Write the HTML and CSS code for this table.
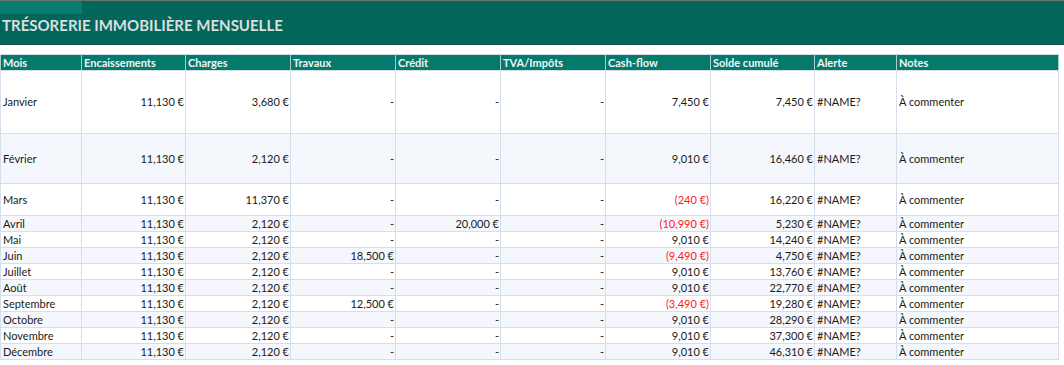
FILE: index.html
```html
<!DOCTYPE html>
<html lang="fr">
<head>
<meta charset="utf-8">
<title>Trésorerie immobilière mensuelle</title>
<link rel="stylesheet" href="styles.css">
</head>
<body>
<div class="sheet">
  <header class="banner">
    <div class="banner-cell"></div>
    <h1 class="banner-title">TRÉSORERIE IMMOBILIÈRE MENSUELLE</h1>
  </header>
  <table class="grid">
    <colgroup>
      <col class="c-mois"><col class="c-num4"><col class="c-num"><col class="c-num"><col class="c-num"><col class="c-num"><col class="c-num"><col class="c-num4"><col class="c-alerte"><col class="c-notes">
    </colgroup>
    <thead>
      <tr class="head">
        <th>Mois</th><th>Encaissements</th><th>Charges</th><th>Travaux</th><th>Crédit</th><th>TVA/Impôts</th><th>Cash-flow</th><th>Solde cumulé</th><th>Alerte</th><th>Notes</th>
      </tr>
    </thead>
    <tbody>
      <tr class="h63"><td>Janvier</td><td class="n">11,130 €</td><td class="n">3,680 €</td><td class="n">-</td><td class="n">-</td><td class="n">-</td><td class="n">7,450 €</td><td class="n">7,450 €</td><td>#NAME?</td><td>À commenter</td></tr>
      <tr class="h50 alt"><td>Février</td><td class="n">11,130 €</td><td class="n">2,120 €</td><td class="n">-</td><td class="n">-</td><td class="n">-</td><td class="n">9,010 €</td><td class="n">16,460 €</td><td>#NAME?</td><td>À commenter</td></tr>
      <tr class="h32"><td>Mars</td><td class="n">11,130 €</td><td class="n">11,370 €</td><td class="n">-</td><td class="n">-</td><td class="n">-</td><td class="n neg">(240 €)</td><td class="n">16,220 €</td><td>#NAME?</td><td>À commenter</td></tr>
      <tr class="alt"><td>Avril</td><td class="n">11,130 €</td><td class="n">2,120 €</td><td class="n">-</td><td class="n">20,000 €</td><td class="n">-</td><td class="n neg">(10,990 €)</td><td class="n">5,230 €</td><td>#NAME?</td><td>À commenter</td></tr>
      <tr><td>Mai</td><td class="n">11,130 €</td><td class="n">2,120 €</td><td class="n">-</td><td class="n">-</td><td class="n">-</td><td class="n">9,010 €</td><td class="n">14,240 €</td><td>#NAME?</td><td>À commenter</td></tr>
      <tr class="alt"><td>Juin</td><td class="n">11,130 €</td><td class="n">2,120 €</td><td class="n">18,500 €</td><td class="n">-</td><td class="n">-</td><td class="n neg">(9,490 €)</td><td class="n">4,750 €</td><td>#NAME?</td><td>À commenter</td></tr>
      <tr><td>Juillet</td><td class="n">11,130 €</td><td class="n">2,120 €</td><td class="n">-</td><td class="n">-</td><td class="n">-</td><td class="n">9,010 €</td><td class="n">13,760 €</td><td>#NAME?</td><td>À commenter</td></tr>
      <tr class="alt"><td>Août</td><td class="n">11,130 €</td><td class="n">2,120 €</td><td class="n">-</td><td class="n">-</td><td class="n">-</td><td class="n">9,010 €</td><td class="n">22,770 €</td><td>#NAME?</td><td>À commenter</td></tr>
      <tr><td>Septembre</td><td class="n">11,130 €</td><td class="n">2,120 €</td><td class="n">12,500 €</td><td class="n">-</td><td class="n">-</td><td class="n neg">(3,490 €)</td><td class="n">19,280 €</td><td>#NAME?</td><td>À commenter</td></tr>
      <tr class="alt"><td>Octobre</td><td class="n">11,130 €</td><td class="n">2,120 €</td><td class="n">-</td><td class="n">-</td><td class="n">-</td><td class="n">9,010 €</td><td class="n">28,290 €</td><td>#NAME?</td><td>À commenter</td></tr>
      <tr><td>Novembre</td><td class="n">11,130 €</td><td class="n">2,120 €</td><td class="n">-</td><td class="n">-</td><td class="n">-</td><td class="n">9,010 €</td><td class="n">37,300 €</td><td>#NAME?</td><td>À commenter</td></tr>
      <tr class="alt"><td>Décembre</td><td class="n">11,130 €</td><td class="n">2,120 €</td><td class="n">-</td><td class="n">-</td><td class="n">-</td><td class="n">9,010 €</td><td class="n">46,310 €</td><td>#NAME?</td><td>À commenter</td></tr>
    </tbody>
  </table>
</div>
</body>
</html>
```

FILE: styles.css
```css
html, body {
  margin: 0;
  padding: 0;
  background: #ffffff;
}

.sheet {
  width: 1064px;
  font-family: Lato, "Open Sans", sans-serif;
  color: #1a1a1a;
}

.banner {
  box-sizing: border-box;
  height: 45px;
  border-top: 1px solid #6f7473;
  border-bottom: 1px solid #0d4c45;
  background: #02665b;
  display: flex;
  flex-direction: column;
}

.banner-cell {
  width: 82px;
  height: 13px;
  background: #087d6f;
  flex: none;
}

.banner-title {
  margin: 0;
  padding: 2px 0 0 2px;
  font-size: 15px;
  line-height: 18px;
  font-weight: 700;
  color: #dcdedd;
}

.grid {
  margin-top: 9px;
  border-collapse: collapse;
  table-layout: fixed;
  width: 1058px;
  font-size: 11px;
}

.c-mois { width: 81px; }
.c-num { width: 105px; }
.c-num4 { width: 104px; }
.c-alerte { width: 82px; }
.c-notes { width: 162px; }

.grid th,
.grid td {
  border: 1px solid #d5dfe9;
  padding: 0 1px 0 2px;
  height: 15px;
  line-height: 14px;
  white-space: nowrap;
  overflow: hidden;
  text-align: left;
  vertical-align: middle;
}

.grid .head th {
  background: #047a6c;
  color: #f2f4f3;
  font-weight: 700;
  border-left-color: #a9ccc7;
  border-right-color: #a9ccc7;
  border-bottom-color: #d5dfe9;
  border-top-color: #d5dfe9;
}

.grid td.n {
  text-align: right;
}

.grid td.neg {
  color: #ff1a1a;
}

.grid tr.alt td {
  background: #f4f7fb;
}

.grid tr.h63 td { height: 62px; }
.grid tr.h50 td { height: 49px; }
.grid tr.h32 td { height: 31px; }
```
